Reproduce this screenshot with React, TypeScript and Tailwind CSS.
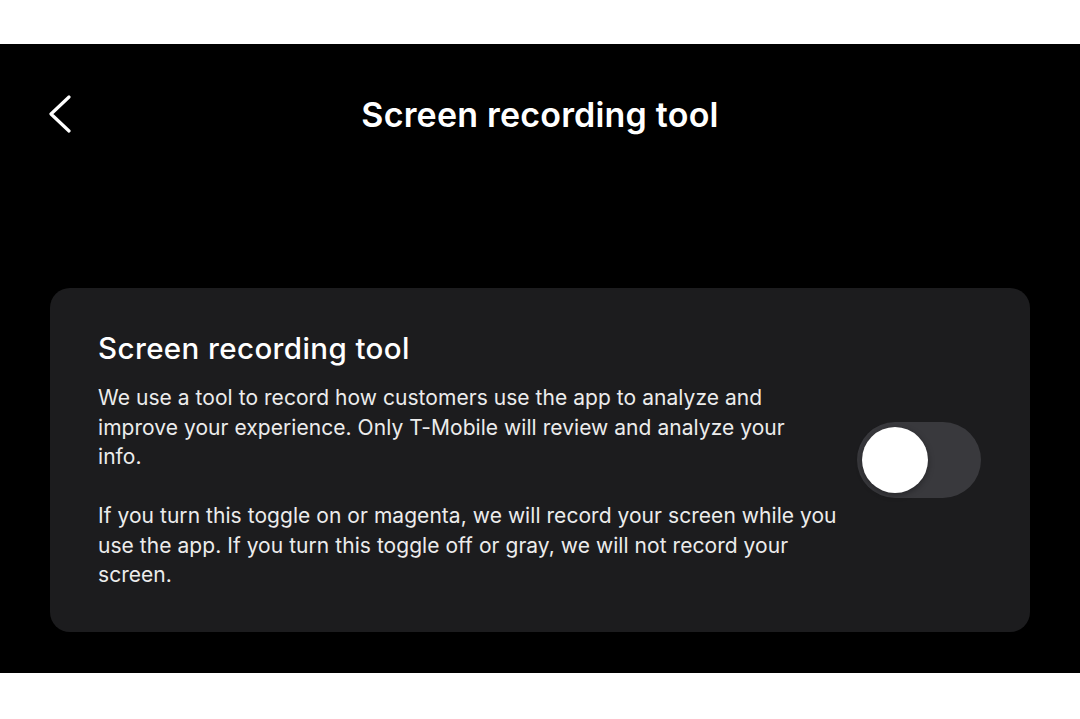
export default function App() {
  return (
    <div
      className="flex h-[719px] w-[1080px] flex-col bg-white"
      style={{ fontFamily: "Inter, 'Noto Sans', sans-serif" }}
    >
      <div className="h-[44px] bg-white" />
      <div className="flex flex-1 flex-col bg-black">
        <div className="relative flex h-[140px] items-center justify-center">
          <button className="absolute left-[48px] top-[51px] text-white">
            <svg width="24" height="38" viewBox="0 0 24 38" fill="none">
              <path d="M21 2L3 19L21 36" stroke="white" strokeWidth="3.2" strokeLinecap="round" strokeLinejoin="round" />
            </svg>
          </button>
          <h1 className="text-[34px] font-semibold tracking-[0.2px] text-white">Screen recording tool</h1>
        </div>
        <div className="mt-[104px] mx-[50px] flex items-center rounded-[20px] bg-[#1c1c1e] pl-[48px] pr-[49px] pt-[42px] pb-[42px]">
          <div className="min-w-0 flex-1 pr-[19px] text-white">
            <h2 className="text-[29.5px] font-medium leading-[36px] tracking-[0.4px]">Screen recording tool</h2>
            <p className="mt-[17px] whitespace-nowrap text-[21px] leading-[29.5px] tracking-[0.05px] text-[#ececec]">
              We use a tool to record how customers use the app to analyze and
              <br />
              improve your experience. Only T-Mobile will review and analyze your
              <br />
              info.
            </p>
            <p className="mt-[29.5px] whitespace-nowrap text-[21px] leading-[29.5px] tracking-[0.05px] text-[#ececec]">
              If you turn this toggle on or magenta, we will record your screen while you
              <br />
              use the app. If you turn this toggle off or gray, we will not record your
              <br />
              screen.
            </p>
          </div>
          <div className="flex h-[76px] w-[124px] shrink-0 items-center rounded-full bg-[#39393d] px-[5px]">
            <div className="h-[66px] w-[66px] rounded-full bg-white shadow-[0_2px_6px_rgba(0,0,0,0.35)]" />
          </div>
        </div>
      </div>
      <div className="h-[46px] bg-white" />
    </div>
  );
}
